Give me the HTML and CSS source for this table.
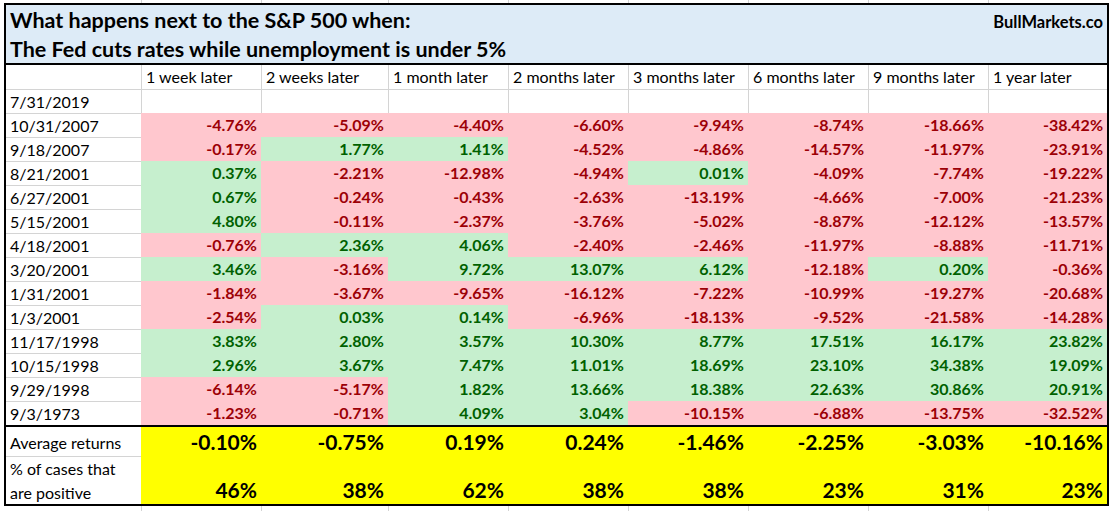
FILE: index.html
```html
<!DOCTYPE html>
<html>
<head>
<meta charset="utf-8">
<link rel="stylesheet" href="styles.css">
</head>
<body>
<div class="sheet">
  <div class="strip strip-top">
    <div></div><div class="g"></div><div class="g"></div><div class="g"></div><div class="g"></div><div class="g"></div><div class="g"></div><div class="g"></div><div class="g"></div>
  </div>
  <div class="table">
    <div class="title">
      <div class="title-line">
        <span class="title-text">What happens next to the S&amp;P 500 when:</span>
        <span class="brand">BullMarkets.co</span>
      </div>
      <div class="title-line">
        <span class="title-text">The Fed cuts rates while unemployment is under 5%</span>
      </div>
    </div>
    <div class="row head">
      <div class="c first"></div>
      <div class="c lbl">1 week later</div>
      <div class="c lbl">2 weeks later</div>
      <div class="c lbl">1 month later</div>
      <div class="c lbl">2 months later</div>
      <div class="c lbl">3 months later</div>
      <div class="c lbl">6 months later</div>
      <div class="c lbl">9 months later</div>
      <div class="c lbl">1 year later</div>
    </div>
    <div class="row">
      <div class="c first">7/31/2019</div>
      <div class="c"></div><div class="c"></div><div class="c"></div><div class="c"></div><div class="c"></div><div class="c"></div><div class="c"></div><div class="c"></div>
    </div>
    <div class="row"><div class="c first">10/31/2007</div><div class="c neg">-4.76%</div><div class="c neg">-5.09%</div><div class="c neg">-4.40%</div><div class="c neg">-6.60%</div><div class="c neg">-9.94%</div><div class="c neg">-8.74%</div><div class="c neg">-18.66%</div><div class="c neg">-38.42%</div></div>
    <div class="row"><div class="c first">9/18/2007</div><div class="c neg">-0.17%</div><div class="c pos">1.77%</div><div class="c pos">1.41%</div><div class="c neg">-4.52%</div><div class="c neg">-4.86%</div><div class="c neg">-14.57%</div><div class="c neg">-11.97%</div><div class="c neg">-23.91%</div></div>
    <div class="row"><div class="c first">8/21/2001</div><div class="c pos">0.37%</div><div class="c neg">-2.21%</div><div class="c neg">-12.98%</div><div class="c neg">-4.94%</div><div class="c pos">0.01%</div><div class="c neg">-4.09%</div><div class="c neg">-7.74%</div><div class="c neg">-19.22%</div></div>
    <div class="row"><div class="c first">6/27/2001</div><div class="c pos">0.67%</div><div class="c neg">-0.24%</div><div class="c neg">-0.43%</div><div class="c neg">-2.63%</div><div class="c neg">-13.19%</div><div class="c neg">-4.66%</div><div class="c neg">-7.00%</div><div class="c neg">-21.23%</div></div>
    <div class="row"><div class="c first">5/15/2001</div><div class="c pos">4.80%</div><div class="c neg">-0.11%</div><div class="c neg">-2.37%</div><div class="c neg">-3.76%</div><div class="c neg">-5.02%</div><div class="c neg">-8.87%</div><div class="c neg">-12.12%</div><div class="c neg">-13.57%</div></div>
    <div class="row"><div class="c first">4/18/2001</div><div class="c neg">-0.76%</div><div class="c pos">2.36%</div><div class="c pos">4.06%</div><div class="c neg">-2.40%</div><div class="c neg">-2.46%</div><div class="c neg">-11.97%</div><div class="c neg">-8.88%</div><div class="c neg">-11.71%</div></div>
    <div class="row"><div class="c first">3/20/2001</div><div class="c pos">3.46%</div><div class="c neg">-3.16%</div><div class="c pos">9.72%</div><div class="c pos">13.07%</div><div class="c pos">6.12%</div><div class="c neg">-12.18%</div><div class="c pos">0.20%</div><div class="c neg">-0.36%</div></div>
    <div class="row"><div class="c first">1/31/2001</div><div class="c neg">-1.84%</div><div class="c neg">-3.67%</div><div class="c neg">-9.65%</div><div class="c neg">-16.12%</div><div class="c neg">-7.22%</div><div class="c neg">-10.99%</div><div class="c neg">-19.27%</div><div class="c neg">-20.68%</div></div>
    <div class="row"><div class="c first">1/3/2001</div><div class="c neg">-2.54%</div><div class="c pos">0.03%</div><div class="c pos">0.14%</div><div class="c neg">-6.96%</div><div class="c neg">-18.13%</div><div class="c neg">-9.52%</div><div class="c neg">-21.58%</div><div class="c neg">-14.28%</div></div>
    <div class="row"><div class="c first">11/17/1998</div><div class="c pos">3.83%</div><div class="c pos">2.80%</div><div class="c pos">3.57%</div><div class="c pos">10.30%</div><div class="c pos">8.77%</div><div class="c pos">17.51%</div><div class="c pos">16.17%</div><div class="c pos">23.82%</div></div>
    <div class="row"><div class="c first">10/15/1998</div><div class="c pos">2.96%</div><div class="c pos">3.67%</div><div class="c pos">7.47%</div><div class="c pos">11.01%</div><div class="c pos">18.69%</div><div class="c pos">23.10%</div><div class="c pos">34.38%</div><div class="c pos">19.09%</div></div>
    <div class="row"><div class="c first">9/29/1998</div><div class="c neg">-6.14%</div><div class="c neg">-5.17%</div><div class="c pos">1.82%</div><div class="c pos">13.66%</div><div class="c pos">18.38%</div><div class="c pos">22.63%</div><div class="c pos">30.86%</div><div class="c pos">20.91%</div></div>
    <div class="row"><div class="c first">9/3/1973</div><div class="c neg">-1.23%</div><div class="c neg">-0.71%</div><div class="c pos">4.09%</div><div class="c pos">3.04%</div><div class="c neg">-10.15%</div><div class="c neg">-6.88%</div><div class="c neg">-13.75%</div><div class="c neg">-32.52%</div></div>
    <div class="footer">
      <div class="row avg">
        <div class="c first">Average returns</div>
        <div class="c sum">-0.10%</div><div class="c sum">-0.75%</div><div class="c sum">0.19%</div><div class="c sum">0.24%</div><div class="c sum">-1.46%</div><div class="c sum">-2.25%</div><div class="c sum">-3.03%</div><div class="c sum">-10.16%</div>
      </div>
      <div class="row pct">
        <div class="c first wrap">% of cases that<br>are positive</div>
        <div class="c sum">46%</div><div class="c sum">38%</div><div class="c sum">62%</div><div class="c sum">38%</div><div class="c sum">38%</div><div class="c sum">23%</div><div class="c sum">31%</div><div class="c sum">23%</div>
      </div>
    </div>
  </div>
  <div class="strip strip-bottom">
    <div></div><div class="g"></div><div class="g"></div><div class="g"></div><div class="g"></div><div class="g"></div><div class="g"></div><div class="g"></div><div class="g"></div>
  </div>
</div>
</body>
</html>
```
FILE: styles.css
```css
* { box-sizing: border-box; }
html, body { margin: 0; padding: 0; background: #fff; }
body {
  font-family: Lato, "Open Sans", "Liberation Sans", sans-serif;
  color: #000;
  width: 1110px;
  height: 511px;
  overflow: hidden;
}
.sheet { width: 1110px; }

.strip {
  display: grid;
  grid-template-columns: 141px 120px 127px 120px 120px 120px 120px 120px 119px;
}
.strip .g { border-left: 1px solid #d4d4d4; }
.strip-top { height: 3px; }
.strip-bottom { height: 5px; }

.table {
  margin-left: 4px;
  width: 1105px;
  border-left: 2px solid #000;
  border-right: 2px solid #000;
}

.title {
  background: #ddebf7;
  border-top: 2px solid #000;
  border-bottom: 2px solid #000;
  height: 62px;
  padding: 0 4px 0 4px;
}
.title-line {
  display: flex;
  align-items: baseline;
  justify-content: space-between;
  height: 29px;
  line-height: 30px;
}
.title-text {
  font-weight: 700;
  font-size: 21.5px;
}
.brand {
  font-weight: 700;
  font-size: 16.5px;
}

.row {
  display: grid;
  grid-template-columns: 135px 120px 127px 120px 120px 120px 120px 120px 119px;
  height: 24px;
}
.c {
  height: 100%;
  font-size: 16px;
  line-height: 24px;
  white-space: nowrap;
  border-top: 1px solid #d4d4d4;
  border-left: 1px solid #d4d4d4;
  padding: 0 4px;
  overflow: hidden;
}
.c.first {
  border-left: none;
  padding-left: 4px;
}
.head .c { border-top: none; }
.lbl { text-align: left; }

.neg, .pos {
  border: none;
  text-align: right;
  font-weight: 700;
  padding-right: 4px;
}
.neg { background: #ffc7ce; color: #9c0006; }
.pos { background: #c6efce; color: #006100; }

.footer {
  border-top: 2px solid #000;
  border-bottom: 2px solid #000;
}
.footer .row.avg { height: 29px; }
.footer .row.pct { height: 48px; }
.footer .avg .c.first { border-top: none; line-height: 31px; }
.footer .pct .c.first { white-space: normal; line-height: 24px; }
.sum {
  border: none;
  background: #ff0;
  text-align: right;
  font-weight: 700;
  font-size: 21px;
  padding-right: 4px;
}
.avg .sum { line-height: 29px; }
.pct .sum { line-height: 29px; padding-top: 19px; }
```
